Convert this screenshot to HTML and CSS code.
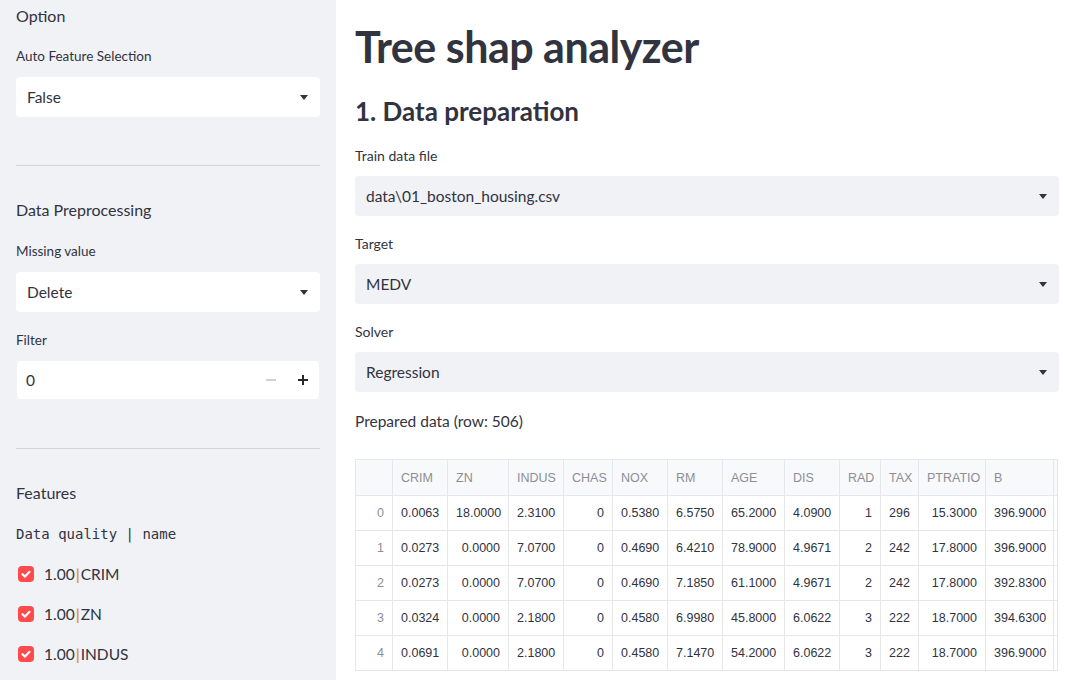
FILE: index.html
```html
<!DOCTYPE html>
<html>
<head>
<meta charset="utf-8">
<link rel="stylesheet" href="styles.css">
</head>
<body>
<div class="app">
  <aside class="sidebar">
    <div class="sb-head first">Option</div>
    <div class="label sb-label">Auto Feature Selection</div>
    <div class="select white"><span>False</span><span class="caret"></span></div>
    <hr class="divider">
    <div class="sb-head">Data Preprocessing</div>
    <div class="label sb-label second-label">Missing value</div>
    <div class="select white"><span>Delete</span><span class="caret"></span></div>
    <div class="label sb-label filter-label">Filter</div>
    <div class="number">
      <span class="num-val">0</span>
      <span class="num-btns">
        <span class="minus"></span>
        <span class="plus"></span>
      </span>
    </div>
    <hr class="divider second">
    <div class="sb-head">Features</div>
    <div class="mono">Data quality | name</div>
    <div class="checks">
      <div class="check"><span class="box"><svg viewBox="0 0 16 16" width="16" height="16"><path d="M4.5 8.2 L7 10.6 L11.5 5.8" fill="none" stroke="#fff" stroke-width="2.2" stroke-linecap="round" stroke-linejoin="round"/></svg></span><span class="ck-text">1.00<span class="pipe">|</span>CRIM</span></div>
      <div class="check"><span class="box"><svg viewBox="0 0 16 16" width="16" height="16"><path d="M4.5 8.2 L7 10.6 L11.5 5.8" fill="none" stroke="#fff" stroke-width="2.2" stroke-linecap="round" stroke-linejoin="round"/></svg></span><span class="ck-text">1.00<span class="pipe">|</span>ZN</span></div>
      <div class="check"><span class="box"><svg viewBox="0 0 16 16" width="16" height="16"><path d="M4.5 8.2 L7 10.6 L11.5 5.8" fill="none" stroke="#fff" stroke-width="2.2" stroke-linecap="round" stroke-linejoin="round"/></svg></span><span class="ck-text">1.00<span class="pipe">|</span>INDUS</span></div>
    </div>
  </aside>
  <main class="main">
    <h1 class="title">Tree shap analyzer</h1>
    <h2 class="subtitle">1. Data preparation</h2>
    <div class="label">Train data file</div>
    <div class="select grey"><span>data\01_boston_housing.csv</span><span class="caret"></span></div>
    <div class="label">Target</div>
    <div class="select grey"><span>MEDV</span><span class="caret"></span></div>
    <div class="label">Solver</div>
    <div class="select grey"><span>Regression</span><span class="caret"></span></div>
    <div class="prepared">Prepared data (row: 506)</div>
    <div class="grid-wrap">
      <table class="grid">
        <colgroup>
          <col style="width:37px"><col style="width:55px"><col style="width:61px"><col style="width:55px"><col style="width:49px"><col style="width:55px"><col style="width:55px"><col style="width:62px"><col style="width:55px"><col style="width:41px"><col style="width:38px"><col style="width:67px"><col style="width:68px"><col style="width:4px">
        </colgroup>
        <thead>
          <tr><th></th><th>CRIM</th><th>ZN</th><th>INDUS</th><th>CHAS</th><th>NOX</th><th>RM</th><th>AGE</th><th>DIS</th><th>RAD</th><th>TAX</th><th>PTRATIO</th><th>B</th><th class="edge"></th></tr>
        </thead>
        <tbody>
          <tr><td class="idx">0</td><td>0.0063</td><td class="r">18.0000</td><td>2.3100</td><td class="r">0</td><td>0.5380</td><td>6.5750</td><td>65.2000</td><td>4.0900</td><td class="r">1</td><td>296</td><td class="r">15.3000</td><td>396.9000</td><td class="edge"></td></tr>
          <tr><td class="idx">1</td><td>0.0273</td><td class="r">0.0000</td><td>7.0700</td><td class="r">0</td><td>0.4690</td><td>6.4210</td><td>78.9000</td><td>4.9671</td><td class="r">2</td><td>242</td><td class="r">17.8000</td><td>396.9000</td><td class="edge"></td></tr>
          <tr><td class="idx">2</td><td>0.0273</td><td class="r">0.0000</td><td>7.0700</td><td class="r">0</td><td>0.4690</td><td>7.1850</td><td>61.1000</td><td>4.9671</td><td class="r">2</td><td>242</td><td class="r">17.8000</td><td>392.8300</td><td class="edge"></td></tr>
          <tr><td class="idx">3</td><td>0.0324</td><td class="r">0.0000</td><td>2.1800</td><td class="r">0</td><td>0.4580</td><td>6.9980</td><td>45.8000</td><td>6.0622</td><td class="r">3</td><td>222</td><td class="r">18.7000</td><td>394.6300</td><td class="edge"></td></tr>
          <tr><td class="idx">4</td><td>0.0691</td><td class="r">0.0000</td><td>2.1800</td><td class="r">0</td><td>0.4580</td><td>7.1470</td><td>54.2000</td><td>6.0622</td><td class="r">3</td><td>222</td><td class="r">18.7000</td><td>396.9000</td><td class="edge"></td></tr>
        </tbody>
      </table>
    </div>
  </main>
</div>
</body>
</html>
```
FILE: styles.css
```css
* { box-sizing: border-box; }
html, body { margin: 0; padding: 0; }
body {
  width: 1067px;
  height: 680px;
  overflow: hidden;
  background: #ffffff;
  color: #31333f;
  font-family: Lato, "Noto Sans", sans-serif;
}
.app {
  display: flex;
  height: 680px;
}
.sidebar {
  width: 336px;
  flex: none;
  background: #f0f2f6;
  padding: 0 16px;
}
.sb-head {
  font-size: 16px;
  line-height: 24px;
  margin-top: 32px;
}
.sb-head.first { margin-top: 4px; }
.label {
  font-size: 14px;
  line-height: 20px;
}
.sb-label {
  font-size: 13.5px;
}
.sidebar .label { margin-top: 18px; margin-bottom: 11px; }
.sidebar .second-label { margin-top: 19px; }
.sidebar .filter-label { margin-top: 18px; }
.select {
  height: 40px;
  border-radius: 4px;
  display: flex;
  align-items: center;
  justify-content: space-between;
  padding: 0 12px 0 11px;
  font-size: 15.5px;
}
.select.white { background: #ffffff; }
.select.grey { background: #f0f2f6; }
.caret {
  width: 0;
  height: 0;
  border-left: 4.5px solid transparent;
  border-right: 4.5px solid transparent;
  border-top: 5px solid #31333f;
  margin-right: 0;
}
.divider {
  border: none;
  border-top: 1px solid #d4d5da;
  margin: 48px 0 0 0;
  height: 0;
}
.divider.second { margin-top: 49px; }
.number {
  height: 38px;
  margin: 0 1px;
  background: #ffffff;
  border-radius: 4px;
  display: flex;
  align-items: center;
  justify-content: space-between;
  padding: 0 11px 0 9px;
  font-size: 15.5px;
}
.num-btns {
  display: flex;
  align-items: center;
  gap: 22px;
}
.minus {
  width: 10px;
  height: 1.5px;
  background: #d0d1d5;
}
.plus {
  width: 10px;
  height: 10px;
  background:
    linear-gradient(#262730, #262730) center / 10px 2px no-repeat,
    linear-gradient(#262730, #262730) center / 2px 10px no-repeat;
}
.mono {
  font-family: "DejaVu Sans Mono", "Liberation Mono", monospace;
  font-size: 14px;
  line-height: 20px;
  margin-top: 19px;
}
.checks {
  margin-top: 18px;
  display: flex;
  flex-direction: column;
  gap: 16px;
}
.check {
  display: flex;
  align-items: center;
  height: 24px;
  font-size: 15.5px;
}
.box {
  width: 16px;
  height: 16px;
  border-radius: 4px;
  background: #ff4b4b;
  margin-left: 2px;
  margin-right: 10px;
  display: flex;
}
.pipe { color: #d99a45; font-weight: 700; margin: 0 1px; }

.main {
  flex: 1;
  padding: 0 8px 0 19px;
}
.title {
  font-size: 43px;
  font-weight: 700;
  line-height: 52px;
  margin: 21px 0 0 0;
  letter-spacing: -0.5px;
}
.subtitle {
  font-size: 26px;
  font-weight: 700;
  line-height: 34px;
  margin: 21px 0 0 0;
}
.main .label {
  margin-top: 0;
  margin-bottom: 10px;
}
.subtitle + .label { margin-top: 18px; }
.main .select { margin-bottom: 18px; }
.prepared {
  font-size: 15.5px;
  line-height: 24px;
  margin-top: -1px;
}
.grid-wrap {
  margin-top: 26px;
  width: 704px;
}
.grid {
  border-collapse: collapse;
  table-layout: fixed;
  width: 703px;
  font-family: "Liberation Sans", Arial, sans-serif;
  font-size: 12.5px;
  border: 1px solid #e6e7ea;
}
.grid th, .grid td {
  border: 1px solid #e6e7ea;
  padding: 0 8px;
  white-space: nowrap;
  overflow: hidden;
}
.grid th {
  height: 36px;
  background: #f8f9fb;
  color: #8c8e96;
  font-weight: 400;
  text-align: left;
}
.grid td {
  height: 35px;
  color: #31333f;
  text-align: left;
}
.grid td.r { text-align: right; }
.grid td.idx { text-align: right; color: #8c8e96; }
.grid .edge { padding: 0; background: #fff; }
.grid th.edge { background: #f8f9fb; }
```
